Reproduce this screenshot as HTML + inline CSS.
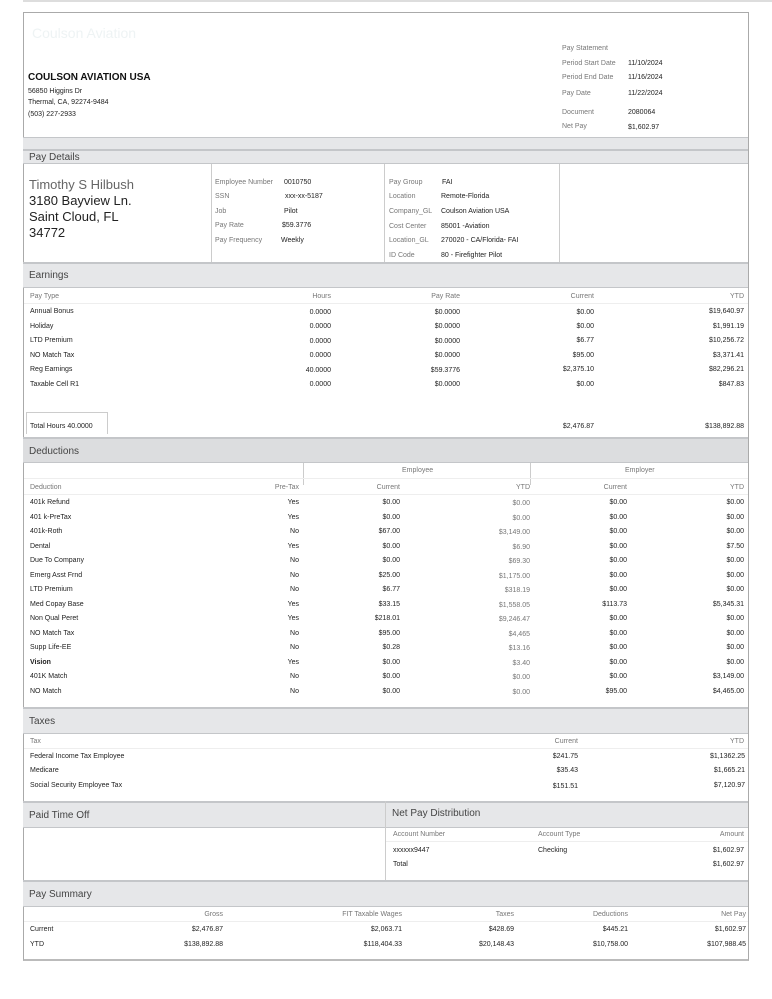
<!DOCTYPE html><html><head><meta charset="utf-8"><style>
*{margin:0;padding:0;box-sizing:border-box}
body{width:772px;height:999px;background:#fff;position:relative;font-family:"Liberation Sans",sans-serif;font-size:7px;color:#222;overflow:hidden}
div,span{position:absolute}
span{line-height:10px;white-space:nowrap}
.g{color:#777}
.h{background:#e6e7e9;border-top:2px solid #c4c6c9;border-bottom:1px solid #c4c6c9;left:23px;width:725px}
.h span{font-size:10px;color:#444;left:6px;line-height:12px}
.l{background:#ccc}
</style></head><body>
<div style="left:23px;top:12px;width:726px;height:949px;border:1px solid #aaa;border-bottom:2px solid #bbb"></div>
<div style="left:23px;top:0;width:749px;height:2px;background:#ddd"></div>
<span style="left:32px;top:28px;font-size:14px;color:#eef3f4">Coulson Aviation</span>
<span style="left:28px;top:73px;font-size:10px;font-weight:bold;color:#111">COULSON AVIATION USA</span>
<span style="left:28px;top:87px">56850 Higgins Dr</span>
<span style="left:28px;top:98px">Thermal, CA, 92274-9484</span>
<span style="left:28px;top:110px">(503) 227-2933</span>
<span class="g" style="left:562px;top:44px">Pay Statement</span>
<span class="g" style="left:562px;top:59px">Period Start Date</span><span style="left:628px;top:59px">11/10/2024</span>
<span class="g" style="left:562px;top:73px">Period End Date</span><span style="left:628px;top:73px">11/16/2024</span>
<span class="g" style="left:562px;top:89px">Pay Date</span><span style="left:628px;top:89px">11/22/2024</span>
<span class="g" style="left:562px;top:108px">Document</span><span style="left:628px;top:108px">2080064</span>
<span class="g" style="left:562px;top:122px">Net Pay</span><span style="left:628px;top:123px">$1,602.97</span>
<div style="left:23px;top:137px;width:725px;height:13px;background:#e6e7e9;border-top:1px solid #c4c6c9"></div>
<div class="h" style="top:149px;height:15px"><span style="top:1px">Pay Details</span></div>
<div class="l" style="left:211px;top:164px;width:1px;height:99px"></div>
<div class="l" style="left:384px;top:164px;width:1px;height:99px"></div>
<div class="l" style="left:559px;top:164px;width:1px;height:99px"></div>
<span style="left:29px;top:178px;font-size:13px;line-height:14px;color:#666">Timothy S Hilbush</span>
<span style="left:29px;top:194px;font-size:13px;line-height:14px">3180 Bayview Ln.</span>
<span style="left:29px;top:210px;font-size:13px;line-height:14px">Saint Cloud, FL</span>
<span style="left:29px;top:226px;font-size:13px;line-height:14px">34772</span>
<span class="g" style="left:215px;top:178px">Employee Number</span><span style="left:284px;top:178px">0010750</span>
<span class="g" style="left:215px;top:192px">SSN</span><span style="left:285px;top:192px">xxx-xx-5187</span>
<span class="g" style="left:215px;top:207px">Job</span><span style="left:284px;top:207px">Pilot</span>
<span class="g" style="left:215px;top:221px">Pay Rate</span><span style="left:282px;top:221px">$59.3776</span>
<span class="g" style="left:215px;top:236px">Pay Frequency</span><span style="left:281px;top:236px">Weekly</span>
<span class="g" style="left:389px;top:178px">Pay Group</span><span style="left:442px;top:178px">FAI</span>
<span class="g" style="left:389px;top:192px">Location</span><span style="left:441px;top:192px">Remote-Florida</span>
<span class="g" style="left:389px;top:207px">Company_GL</span><span style="left:441px;top:207px">Coulson Aviation USA</span>
<span class="g" style="left:389px;top:222px">Cost Center</span><span style="left:441px;top:222px">85001 -Aviation</span>
<span class="g" style="left:389px;top:236px">Location_GL</span><span style="left:441px;top:236px">270020 - CA/Florida- FAI</span>
<span class="g" style="left:389px;top:251px">ID Code</span><span style="left:441px;top:251px">80 - Firefighter Pilot</span>
<div class="h" style="top:262px;height:26px"><span style="top:6px">Earnings</span></div>
<span class="g" style="left:30px;top:292px">Pay Type</span><span class="g" style="right:441px;top:292px">Hours</span><span class="g" style="right:312px;top:292px">Pay Rate</span><span class="g" style="right:178px;top:292px">Current</span><span class="g" style="right:28px;top:292px">YTD</span>
<div class="l" style="left:24px;top:303px;width:724px;height:1px;background:#eee"></div>
<span style="left:30px;top:307px">Annual Bonus</span><span style="right:441px;top:308px">0.0000</span><span style="right:312px;top:308px">$0.0000</span><span style="right:178px;top:308px">$0.00</span><span style="right:28px;top:307px">$19,640.97</span>
<span style="left:30px;top:322px">Holiday</span><span style="right:441px;top:322px">0.0000</span><span style="right:312px;top:322px">$0.0000</span><span style="right:178px;top:322px">$0.00</span><span style="right:28px;top:322px">$1,991.19</span>
<span style="left:30px;top:336px">LTD Premium</span><span style="right:441px;top:337px">0.0000</span><span style="right:312px;top:337px">$0.0000</span><span style="right:178px;top:336px">$6.77</span><span style="right:28px;top:336px">$10,256.72</span>
<span style="left:30px;top:351px">NO Match Tax</span><span style="right:441px;top:351px">0.0000</span><span style="right:312px;top:351px">$0.0000</span><span style="right:178px;top:351px">$95.00</span><span style="right:28px;top:351px">$3,371.41</span>
<span style="left:30px;top:365px">Reg Earnings</span><span style="right:441px;top:366px">40.0000</span><span style="right:312px;top:366px">$59.3776</span><span style="right:178px;top:365px">$2,375.10</span><span style="right:28px;top:365px">$82,296.21</span>
<span style="left:30px;top:380px">Taxable Cell R1</span><span style="right:441px;top:380px">0.0000</span><span style="right:312px;top:380px">$0.0000</span><span style="right:178px;top:380px">$0.00</span><span style="right:28px;top:380px">$847.83</span>
<div style="left:26px;top:412px;width:82px;height:22px;border-left:1px solid #ccc;border-right:1px solid #ccc;border-top:1px solid #ccc"></div>
<span style="left:30px;top:422px">Total Hours 40.0000</span><span style="right:178px;top:422px">$2,476.87</span><span style="right:28px;top:422px">$138,892.88</span>
<div class="h" style="top:437px;height:26px;background:#dcdddf"><span style="top:7px">Deductions</span></div>
<div class="l" style="left:303px;top:463px;width:1px;height:22px"></div>
<div class="l" style="left:530px;top:463px;width:1px;height:22px"></div>
<div style="left:303px;top:478px;width:445px;height:1px;background:#e4e4e4"></div>
<div style="left:24px;top:478px;width:724px;height:1px;background:#eee"></div>
<span class="g" style="left:402px;top:466px">Employee</span><span class="g" style="left:625px;top:466px">Employer</span>
<span class="g" style="left:30px;top:483px">Deduction</span><span class="g" style="right:473px;top:483px">Pre-Tax</span><span class="g" style="right:372px;top:483px">Current</span><span class="g" style="right:242px;top:483px">YTD</span><span class="g" style="right:145px;top:483px">Current</span><span class="g" style="right:28px;top:483px">YTD</span>
<div style="left:24px;top:494px;width:724px;height:1px;background:#eee"></div>
<div id="ded"></div>
<span style="left:30px;top:498px">401k Refund</span><span style="right:473px;top:498px">Yes</span><span style="right:372px;top:498px">$0.00</span><span class="g" style="right:242px;top:499px">$0.00</span><span style="right:145px;top:498px">$0.00</span><span style="right:28px;top:498px">$0.00</span>
<span style="left:30px;top:513px">401 k-PreTax</span><span style="right:473px;top:513px">Yes</span><span style="right:372px;top:513px">$0.00</span><span class="g" style="right:242px;top:514px">$0.00</span><span style="right:145px;top:513px">$0.00</span><span style="right:28px;top:513px">$0.00</span>
<span style="left:30px;top:527px">401k-Roth</span><span style="right:473px;top:527px">No</span><span style="right:372px;top:527px">$67.00</span><span class="g" style="right:242px;top:528px">$3,149.00</span><span style="right:145px;top:527px">$0.00</span><span style="right:28px;top:527px">$0.00</span>
<span style="left:30px;top:542px">Dental</span><span style="right:473px;top:542px">Yes</span><span style="right:372px;top:542px">$0.00</span><span class="g" style="right:242px;top:543px">$6.90</span><span style="right:145px;top:542px">$0.00</span><span style="right:28px;top:542px">$7.50</span>
<span style="left:30px;top:556px">Due To Company</span><span style="right:473px;top:556px">No</span><span style="right:372px;top:556px">$0.00</span><span class="g" style="right:242px;top:557px">$69.30</span><span style="right:145px;top:556px">$0.00</span><span style="right:28px;top:556px">$0.00</span>
<span style="left:30px;top:571px">Emerg Asst Frnd</span><span style="right:473px;top:571px">No</span><span style="right:372px;top:571px">$25.00</span><span class="g" style="right:242px;top:572px">$1,175.00</span><span style="right:145px;top:571px">$0.00</span><span style="right:28px;top:571px">$0.00</span>
<span style="left:30px;top:585px">LTD Premium</span><span style="right:473px;top:585px">No</span><span style="right:372px;top:585px">$6.77</span><span class="g" style="right:242px;top:586px">$318.19</span><span style="right:145px;top:585px">$0.00</span><span style="right:28px;top:585px">$0.00</span>
<span style="left:30px;top:600px">Med Copay Base</span><span style="right:473px;top:600px">Yes</span><span style="right:372px;top:600px">$33.15</span><span class="g" style="right:242px;top:601px">$1,558.05</span><span style="right:145px;top:600px">$113.73</span><span style="right:28px;top:600px">$5,345.31</span>
<span style="left:30px;top:614px">Non Qual Peret</span><span style="right:473px;top:614px">Yes</span><span style="right:372px;top:614px">$218.01</span><span class="g" style="right:242px;top:615px">$9,246.47</span><span style="right:145px;top:614px">$0.00</span><span style="right:28px;top:614px">$0.00</span>
<span style="left:30px;top:629px">NO Match Tax</span><span style="right:473px;top:629px">No</span><span style="right:372px;top:629px">$95.00</span><span class="g" style="right:242px;top:630px">$4,465</span><span style="right:145px;top:629px">$0.00</span><span style="right:28px;top:629px">$0.00</span>
<span style="left:30px;top:643px">Supp Life-EE</span><span style="right:473px;top:643px">No</span><span style="right:372px;top:643px">$0.28</span><span class="g" style="right:242px;top:644px">$13.16</span><span style="right:145px;top:643px">$0.00</span><span style="right:28px;top:643px">$0.00</span>
<span style="left:30px;top:658px;font-weight:bold">Vision</span><span style="right:473px;top:658px">Yes</span><span style="right:372px;top:658px">$0.00</span><span class="g" style="right:242px;top:659px">$3.40</span><span style="right:145px;top:658px">$0.00</span><span style="right:28px;top:658px">$0.00</span>
<span style="left:30px;top:672px">401K Match</span><span style="right:473px;top:672px">No</span><span style="right:372px;top:672px">$0.00</span><span class="g" style="right:242px;top:673px">$0.00</span><span style="right:145px;top:672px">$0.00</span><span style="right:28px;top:672px">$3,149.00</span>
<span style="left:30px;top:687px">NO Match</span><span style="right:473px;top:687px">No</span><span style="right:372px;top:687px">$0.00</span><span class="g" style="right:242px;top:688px">$0.00</span><span style="right:145px;top:687px">$95.00</span><span style="right:28px;top:687px">$4,465.00</span>
<div class="h" style="top:707px;height:27px"><span style="top:7px">Taxes</span></div>
<span class="g" style="left:30px;top:737px">Tax</span><span class="g" style="right:194px;top:737px">Current</span><span class="g" style="right:28px;top:737px">YTD</span>
<div style="left:24px;top:748px;width:724px;height:1px;background:#eee"></div>
<span style="left:30px;top:752px">Federal Income Tax Employee</span><span style="right:194px;top:752px">$241.75</span><span style="right:27px;top:752px">$1,1362.25</span>
<span style="left:30px;top:766px">Medicare</span><span style="right:194px;top:766px">$35.43</span><span style="right:27px;top:766px">$1,665.21</span>
<span style="left:30px;top:781px">Social Security Employee Tax</span><span style="right:194px;top:782px">$151.51</span><span style="right:27px;top:781px">$7,120.97</span>
<div class="h" style="top:801px;height:27px"><span style="top:7px">Paid Time Off</span></div>
<span style="left:392px;top:808px;font-size:10px;color:#444;line-height:12px">Net Pay Distribution</span>
<div class="l" style="left:385px;top:801px;width:1px;height:80px"></div>
<span class="g" style="left:393px;top:830px">Account Number</span><span class="g" style="left:538px;top:830px">Account Type</span><span class="g" style="right:28px;top:830px">Amount</span>
<div style="left:386px;top:841px;width:362px;height:1px;background:#eee"></div>
<span style="left:393px;top:846px">xxxxxx9447</span><span style="left:538px;top:846px">Checking</span><span style="right:28px;top:846px">$1,602.97</span>
<span style="left:393px;top:860px">Total</span><span style="right:28px;top:860px">$1,602.97</span>
<div class="h" style="top:880px;height:27px"><span style="top:7px">Pay Summary</span></div>
<span class="g" style="right:549px;top:910px">Gross</span><span class="g" style="right:370px;top:910px">FIT Taxable Wages</span><span class="g" style="right:258px;top:910px">Taxes</span><span class="g" style="right:144px;top:910px">Deductions</span><span class="g" style="right:26px;top:910px">Net Pay</span>
<div style="left:24px;top:921px;width:724px;height:1px;background:#eee"></div>
<span style="left:30px;top:925px">Current</span><span style="right:549px;top:925px">$2,476.87</span><span style="right:370px;top:925px">$2,063.71</span><span style="right:258px;top:925px">$428.69</span><span style="right:144px;top:925px">$445.21</span><span style="right:26px;top:925px">$1,602.97</span>
<span style="left:30px;top:940px">YTD</span><span style="right:549px;top:940px">$138,892.88</span><span style="right:370px;top:940px">$118,404.33</span><span style="right:258px;top:940px">$20,148.43</span><span style="right:144px;top:940px">$10,758.00</span><span style="right:26px;top:940px">$107,988.45</span>
</body></html>
